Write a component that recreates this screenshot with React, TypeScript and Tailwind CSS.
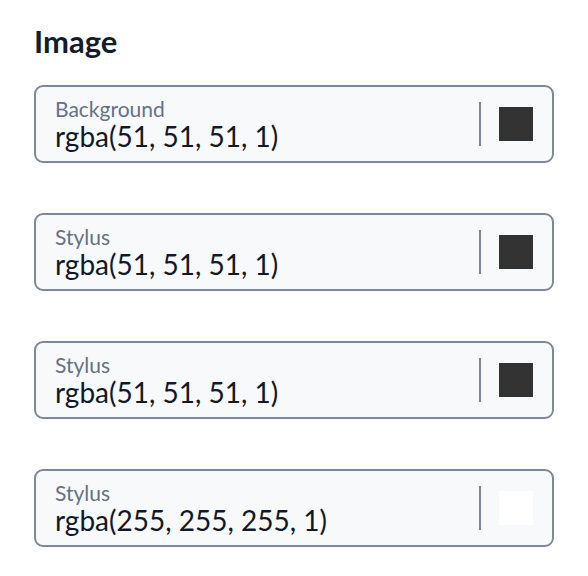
import * as React from "react";

const fields = [
  { label: "Background", value: "rgba(51, 51, 51, 1)", color: "bg-[#333333]" },
  { label: "Stylus", value: "rgba(51, 51, 51, 1)", color: "bg-[#333333]" },
  { label: "Stylus", value: "rgba(51, 51, 51, 1)", color: "bg-[#333333]" },
  { label: "Stylus", value: "rgba(255, 255, 255, 1)", color: "bg-white" },
];

function ColorField({
  label,
  value,
  color,
}: {
  label: string;
  value: string;
  color: string;
}) {
  return (
    <div className="flex h-[78px] items-center rounded-[9px] border-2 border-[#7d8898] bg-[#f8f9fa] pl-[19px] pr-[19px]">
      <div className="flex flex-1 flex-col pt-[1px]">
        <span className="text-[21px] leading-[24px] text-[#64718a]">{label}</span>
        <span className="text-[28px] leading-[31px] text-[#111827]">{value}</span>
      </div>
      <div className="h-[44px] w-[2px] bg-[#7d8898]" />
      <div className={`ml-[18px] h-[34px] w-[34px] ${color}`} />
    </div>
  );
}

export default function App() {
  return (
    <div className="min-h-screen bg-white px-[34px] pt-[23px] font-['Lato',sans-serif]">
      <h2 className="text-[31px] font-bold leading-[36px] text-[#141c2c]">Image</h2>
      <div className="mt-[26px] flex flex-col gap-[50px]">
        {fields.map((f, i) => (
          <ColorField key={i} {...f} />
        ))}
      </div>
    </div>
  );
}
